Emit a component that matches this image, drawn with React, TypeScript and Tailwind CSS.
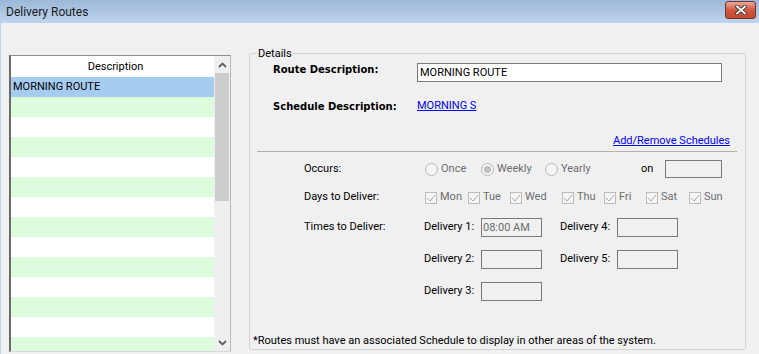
import React from "react";

const days = [
  { label: "Mon", w: "w-[43px]" },
  { label: "Tue", w: "w-[42px]" },
  { label: "Wed", w: "w-[52px]" },
  { label: "Thu", w: "w-[42px]" },
  { label: "Fri", w: "w-[42px]" },
  { label: "Sat", w: "w-[43px]" },
  { label: "Sun", w: "w-[40px]" },
];

function CloseButton(): React.ReactElement {
  return (
    <div className="mt-[1px] self-start w-[31px] h-[18px] rounded-[3px] border border-[#6e3535] bg-gradient-to-b from-[#eaa999] via-[#d0573e] to-[#c8472c] flex items-center justify-center">
      <svg width="12" height="10" viewBox="0 0 12 10">
        <path d="M2 1.5 L10 8.5 M10 1.5 L2 8.5" stroke="#3b3b3b" strokeWidth="3.6" strokeLinecap="square" />
        <path d="M2 1.5 L10 8.5 M10 1.5 L2 8.5" stroke="#ffffff" strokeWidth="1.8" strokeLinecap="square" />
      </svg>
    </div>
  );
}

function Chevron({ up }: { up: boolean }): React.ReactElement {
  return (
    <svg width="9" height="6" viewBox="0 0 9 6">
      <polyline
        points={up ? "1,5 4.5,1.5 8,5" : "1,1 4.5,4.5 8,1"}
        fill="none"
        stroke="#606060"
        strokeWidth="1.8"
      />
    </svg>
  );
}

function RouteList(): React.ReactElement {
  const rows = Array.from({ length: 14 }, (_, i) => i);
  return (
    <div className="ml-[8px] mt-[32px] w-[222px] h-[297px] flex bg-white border-t border-t-[#8e8e8e] border-l-2 border-l-[#6b6b6b] border-r border-r-[#b8b8b8] border-b border-b-[#d8d8d8]">
      <div className="flex-1 flex flex-col overflow-hidden">
        <div className="h-[21px] shrink-0 flex items-center justify-center pl-[6px] pt-[2px]">Description</div>
        {rows.map((i) => (
          <div
            key={i}
            className={`h-[20px] shrink-0 flex items-center pl-[2px] ${
              i === 0 ? "bg-[#a6cdf0]" : i % 2 === 1 ? "bg-[#ddfcdd]" : "bg-white"
            }`}
          >
            {i === 0 ? "MORNING ROUTE" : ""}
          </div>
        ))}
      </div>
      <div className="w-[16px] flex flex-col bg-[#efefef]">
        <div className="h-[17px] flex items-center justify-center">
          <Chevron up />
        </div>
        <div className="h-[128px] mx-[1px] bg-[#cdcdcd]" />
        <div className="flex-1" />
        <div className="h-[17px] flex items-center justify-center">
          <Chevron up={false} />
        </div>
      </div>
    </div>
  );
}

function Radio({ label, checked, w }: { label: string; checked?: boolean; w: string }): React.ReactElement {
  return (
    <div className={`${w} flex items-center gap-[3px]`}>
      <div className="w-[13px] h-[13px] rounded-full border border-[#b8b8b8] bg-[#f6f6f6] flex items-center justify-center">
        {checked && <div className="w-[7px] h-[7px] rounded-full bg-[#c2c2c2] border border-[#b0b0b0]" />}
      </div>
      <span className="text-[#6d6d6d]">{label}</span>
    </div>
  );
}

function Check({ label, w }: { label: string; w: string }): React.ReactElement {
  return (
    <div className={`${w} flex items-center gap-[3px]`}>
      <div className="w-[12px] h-[12px] border border-[#bcbcbc] bg-[#f6f6f6] flex items-center justify-center">
        <svg width="10" height="8" viewBox="0 0 10 8">
          <polyline points="1,4 4,7 9,1" fill="none" stroke="#a8a8a8" strokeWidth="1" />
        </svg>
      </div>
      <span className="text-[#6d6d6d]">{label}</span>
    </div>
  );
}

function TimeBox({ value }: { value?: string }): React.ReactElement {
  return (
    <input
      readOnly
      value={value ?? ""}
      className="w-[61px] h-[19px] border border-[#7a7a7a] bg-[#f0f0f0] pl-[1px] text-[#6d6d6d] outline-none"
    />
  );
}

function DetailsGroup(): React.ReactElement {
  const bold = "font-['DejaVu_Sans',sans-serif] font-bold text-[10px]";
  return (
    <div className="ml-[18px] mt-[30px] w-[497px] h-[297px] relative border border-[#d5d5d5] rounded-[2px] flex flex-col">
      <span className="absolute left-[7px] -top-[7px] px-[1px] bg-[#f0f0f0] leading-[13px]">Details</span>

      {/* route description */}
      <div className="mt-[9px] h-[19px] flex items-start pl-[23px]">
        <span className={`${bold} w-[144px] leading-[12px] pt-[1px]`}>Route Description:</span>
        <input
          readOnly
          value="MORNING ROUTE"
          className="w-[305px] h-[19px] border border-[#7a7a7a] bg-white pl-[2px] outline-none"
        />
      </div>

      {/* schedule description */}
      <div className="mt-[15px] h-[19px] flex items-center pl-[23px]">
        <span className={`${bold} w-[144px]`}>Schedule Description:</span>
        <a href="#" className="text-[#0000ff] underline">MORNING S</a>
      </div>

      <div className="mt-[16px] h-[18px] flex items-center justify-end pr-[15px]">
        <a href="#" className="text-[#0000ff] underline">Add/Remove Schedules</a>
      </div>

      <div className="mt-[1px] ml-[7px] w-[480px] h-px bg-[#b0b0b0]" />

      {/* occurs */}
      <div className="mt-[8px] h-[18px] flex items-center pl-[54px]">
        <span className="w-[121px]">Occurs:</span>
        <Radio label="Once" w="w-[56px]" />
        <Radio label="Weekly" w="w-[64px]" checked />
        <Radio label="Yearly" w="w-[96px]" />
        <span className="w-[24px]">on</span>
        <div className="w-[57px] h-[18px] border border-[#7a7a7a] bg-[#f0f0f0]" />
      </div>

      {/* days */}
      <div className="mt-[10px] h-[19px] flex items-center pl-[54px]">
        <span className="w-[121px]">Days to Deliver:</span>
        {days.map((d) => (
          <Check key={d.label} label={d.label} w={d.w} />
        ))}
      </div>

      {/* times */}
      <div className="mt-[11px] h-[19px] flex items-center pl-[54px]">
        <span className="w-[120px]">Times to Deliver:</span>
        <span className="w-[57px]">Delivery 1:</span>
        <TimeBox value="08:00 AM" />
        <span className="w-[18px]" />
        <span className="w-[57px]">Delivery 4:</span>
        <TimeBox />
      </div>
      <div className="mt-[13px] h-[19px] flex items-center pl-[174px]">
        <span className="w-[57px]">Delivery 2:</span>
        <TimeBox />
        <span className="w-[18px]" />
        <span className="w-[57px]">Delivery 5:</span>
        <TimeBox />
      </div>
      <div className="mt-[13px] h-[19px] flex items-center pl-[174px]">
        <span className="w-[57px]">Delivery 3:</span>
        <TimeBox />
      </div>

      <div className="mt-auto h-[16px] flex items-center pl-[3px]">
        *Routes must have an associated Schedule to display in other areas of the system.
      </div>
    </div>
  );
}

export default function App(): React.ReactElement {
  return (
    <div className="w-[759px] h-[354px] overflow-hidden bg-[#f0f0f0] flex flex-col font-['Roboto',sans-serif] text-[11px] text-black">
      <div className="h-[23px] shrink-0 flex items-center justify-between bg-gradient-to-b from-[#9cb7d8] to-[#bfd5ee] pl-[6px] pr-[3px]">
        <span className="text-[12px] text-[#1b1b1b]">Delivery Routes</span>
        <CloseButton />
      </div>
      <div className="flex-1 flex items-start border-l border-[#bcd1ea]">
        <RouteList />
        <DetailsGroup />
      </div>
    </div>
  );
}
